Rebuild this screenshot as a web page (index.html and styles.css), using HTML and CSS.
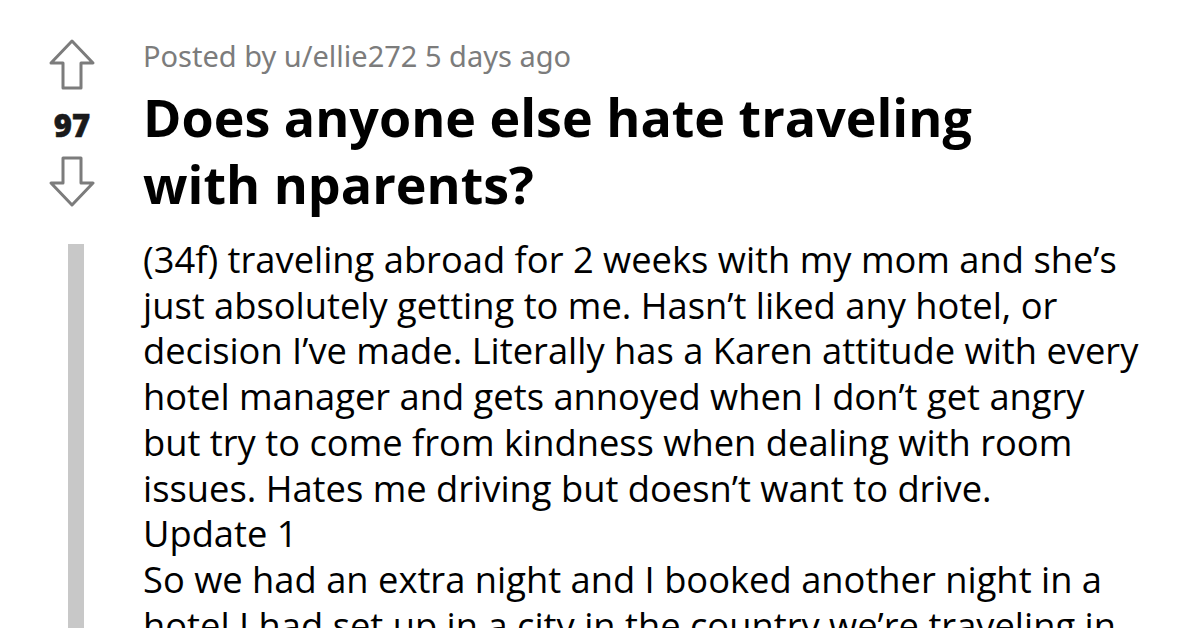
FILE: index.html
```html
<!DOCTYPE html>
<html>
<head>
<meta charset="utf-8">
<link rel="stylesheet" href="styles.css">
</head>
<body>
<div class="post">
  <div class="head">
    <div class="votes">
      <svg class="arrow" width="48" height="52" viewBox="0 0 48 52"><path d="M24 3 L45 25 L33 25 L33 50 L15 50 L15 25 L3 25 Z" fill="none" stroke="#7c7c7c" stroke-width="3" stroke-linejoin="round"/></svg>
      <div class="count">97</div>
      <svg class="arrow" width="48" height="52" viewBox="0 0 48 52"><path d="M24 50 L45 28 L33 28 L33 3 L15 3 L15 28 L3 28 Z" fill="none" stroke="#7c7c7c" stroke-width="3" stroke-linejoin="round"/></svg>
    </div>
    <div class="titles">
      <div class="meta">Posted by u/ellie272 5 days ago</div>
      <h1 class="title">Does anyone else hate traveling with nparents?</h1>
    </div>
  </div>
  <div class="content">
    <div class="bar"></div>
    <div class="body">
      <p>(34f) traveling abroad for 2 weeks with my mom and she’s just absolutely getting to me. Hasn’t liked any hotel, or decision I’ve made. Literally has a Karen attitude with every hotel manager and gets annoyed when I don’t get angry but try to come from kindness when dealing with room issues. Hates me driving but doesn’t want to drive.</p>
      <p>Update 1</p>
      <p>So we had an extra night and I booked another night in a hotel I had set up in a city in the country we’re traveling in.</p>
    </div>
  </div>
</div>
</body>
</html>
```
FILE: styles.css
```css
html, body {
  margin: 0;
  padding: 0;
  background: #ffffff;
  width: 1200px;
  height: 628px;
  overflow: hidden;
}
.post {
  padding-top: 38px;
  font-family: "Open Sans", "Noto Sans", sans-serif;
}
.head {
  display: flex;
}
.votes {
  width: 143px;
  padding-left: 48px;
  box-sizing: border-box;
  display: flex;
  flex-direction: column;
}
.arrow {
  display: block;
  width: 48px;
  height: 52px;
}
.count {
  width: 48px;
  text-align: center;
  font-family: "Noto Sans", sans-serif;
  font-weight: 900;
  font-size: 31px;
  line-height: 30px;
  margin: 20px 0 15px 0;
  color: #1a1a1b;
  -webkit-text-stroke: 0.6px #1a1a1b;
}
.titles {
  flex: 1;
}
.meta {
  font-family: "Noto Sans", sans-serif;
  font-size: 29px;
  line-height: 38px;
  color: #7c7c7c;
  margin-top: -1px;
}
.title {
  margin: 8px 0 0 0;
  font-size: 52px;
  line-height: 67px;
  font-weight: 700;
  color: #000;
  width: 900px;
}
.content {
  display: flex;
  margin-top: 20px;
}
.bar {
  width: 16px;
  margin-left: 68px;
  margin-right: 59px;
  margin-top: 7px;
  background: #c8c8c8;
  height: 420px;
}
.body {
  flex: 1;
  font-size: 36.3px;
  line-height: 45.7px;
  color: #000;
  padding-right: 55px;
}
.body p {
  margin: 0;
}
```
